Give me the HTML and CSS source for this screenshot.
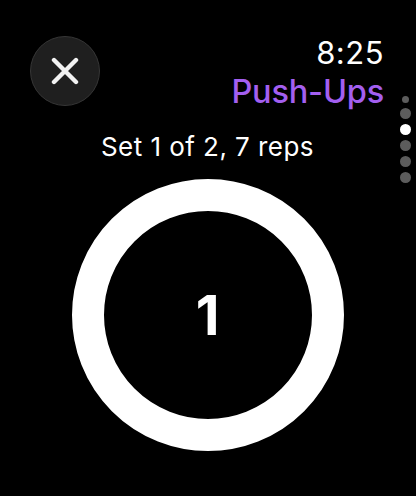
FILE: index.html
```html
<!DOCTYPE html>
<html lang="en">
<head>
<meta charset="utf-8">
<title>Push-Ups</title>
<link rel="stylesheet" href="styles.css">
</head>
<body>
<div class="screen">
  <header class="top">
    <button class="close" aria-label="Close">
      <svg viewBox="0 0 28 28" width="28" height="28"><path d="M3 3 L25 25 M25 3 L3 25" stroke="#f2f2f2" stroke-width="4.4" stroke-linecap="round" fill="none"/></svg>
    </button>
    <div class="titles">
      <div class="time">8:25</div>
      <div class="title">Push-Ups</div>
    </div>
  </header>
  <div class="subtitle">Set 1 of 2, 7 reps</div>
  <div class="ring-wrap">
    <div class="ring"><span class="count">1</span></div>
  </div>
  <div class="pager">
    <span class="dot small"></span>
    <span class="dot"></span>
    <span class="dot active"></span>
    <span class="dot"></span>
    <span class="dot"></span>
    <span class="dot"></span>
  </div>
</div>
</body>
</html>
```
FILE: styles.css
```css
html, body {
  margin: 0;
  padding: 0;
  background: #000;
}
body {
  font-family: Inter, "Noto Sans", "Liberation Sans", sans-serif;
  color: #fff;
}
.screen {
  position: relative;
  width: 416px;
  height: 496px;
  overflow: hidden;
  display: flex;
  flex-direction: column;
}
.top {
  display: flex;
  justify-content: space-between;
  align-items: flex-start;
  padding: 34px 32px 0 30px;
}
.close {
  margin-top: 2px;
  width: 70px;
  height: 70px;
  border-radius: 50%;
  background: #1f1f1f;
  border: 1.5px solid #363636;
  display: flex;
  align-items: center;
  justify-content: center;
  padding: 0;
  box-sizing: border-box;
}
.close svg {
  display: block;
}
.titles {
  display: flex;
  flex-direction: column;
  align-items: flex-end;
}
.time {
  font-size: 31px;
  line-height: 38px;
  font-weight: 400;
  letter-spacing: 0.5px;
}
.title {
  font-size: 32.5px;
  line-height: 40px;
  font-weight: 500;
  letter-spacing: -0.2px;
  color: #a35ff0;
}
.subtitle {
  margin-top: 19px;
  text-align: center;
  font-size: 26px;
  line-height: 32px;
  font-weight: 400;
  letter-spacing: 0.45px;
  padding-right: 1px;
}
.ring-wrap {
  display: flex;
  justify-content: center;
  margin-top: 16px;
  padding-right: 1px;
}
.ring {
  width: 272px;
  height: 272px;
  box-sizing: border-box;
  border: 32px solid #fff;
  border-radius: 50%;
  display: flex;
  align-items: center;
  justify-content: center;
}
.count {
  font-size: 55px;
  font-weight: 700;
  line-height: 1;
}
.pager {
  position: absolute;
  top: 96px;
  right: 5px;
  display: flex;
  flex-direction: column;
  align-items: center;
  gap: 5px;
}
.dot {
  width: 11px;
  height: 11px;
  border-radius: 50%;
  background: #5c5c5c;
}
.dot.small {
  width: 7px;
  height: 7px;
}
.dot.active {
  background: #fff;
}
```
